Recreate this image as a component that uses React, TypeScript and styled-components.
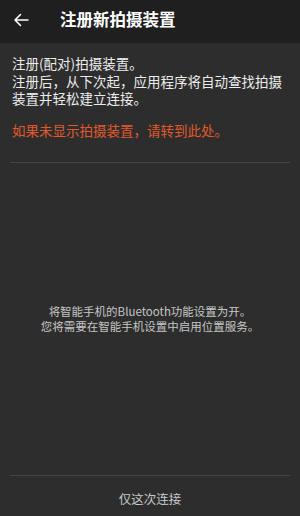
import styled, { createGlobalStyle } from 'styled-components';

const GlobalStyle = createGlobalStyle`
  html, body {
    margin: 0;
    padding: 0;
    background: #2d2d2d;
  }
  body {
    font-family: "Noto Sans CJK SC", "Noto Sans", sans-serif;
  }
`;

const Screen = styled.div`
  width: 300px;
  height: 516px;
  display: flex;
  flex-direction: column;
  background: #2d2d2d;
  overflow: hidden;
`;

const Header = styled.div`
  height: 43px;
  flex-shrink: 0;
  display: flex;
  align-items: center;
  background: #1f1f1f;
`;

const BackButton = styled.div`
  width: 60px;
  height: 43px;
  display: flex;
  align-items: center;
  padding-left: 13px;
  padding-bottom: 4px;
  box-sizing: border-box;
`;

const Title = styled.div`
  color: #ffffff;
  font-size: 16.5px;
  font-weight: 700;
  margin-top: -5px;
`;

const Intro = styled.div`
  padding: 12px 10px 0 12px;
`;

const Paragraph = styled.p<{ $accent?: boolean }>`
  margin: 0;
  font-size: 13.5px;
  line-height: 17.5px;
  color: ${(p) => (p.$accent ? '#e2592a' : '#ececec')};
`;

const Spacer = styled.div<{ $h: number }>`
  height: ${(p) => p.$h}px;
`;

const Divider = styled.div`
  height: 1px;
  margin: 0 10px;
  background: #454545;
`;

const Middle = styled.div`
  flex: 1;
  display: flex;
  flex-direction: column;
  align-items: center;
  justify-content: center;
`;

const Hint = styled.p`
  margin: 0;
  font-size: 11.5px;
  line-height: 15px;
  color: #c6c6c6;
  text-align: center;
`;

const Footer = styled.div`
  height: 40px;
  flex-shrink: 0;
  display: flex;
  align-items: center;
  justify-content: center;
  color: #c8c8c8;
  font-size: 12.5px;
  padding-top: 4px;
  box-sizing: border-box;
`;

export default function App() {
  return (
    <>
      <GlobalStyle />
      <Screen>
        <Header>
          <BackButton>
            <svg width="16" height="16" viewBox="0 0 16 16" fill="none">
              <path
                d="M15 8H2M7.5 2.5L2 8l5.5 5.5"
                stroke="#ffffff"
                strokeWidth="1.6"
                strokeLinecap="round"
                strokeLinejoin="round"
              />
            </svg>
          </BackButton>
          <Title>注册新拍摄装置</Title>
        </Header>
        <Intro>
          <Paragraph>注册(配对)拍摄装置。</Paragraph>
          <Paragraph>注册后，从下次起，应用程序将自动查找拍摄装置并轻松建立连接。</Paragraph>
          <Spacer $h={14.5} />
          <Paragraph $accent>如果未显示拍摄装置，请转到此处。</Paragraph>
          <Spacer $h={22} />
        </Intro>
        <Divider />
        <Middle>
          <Hint>将智能手机的Bluetooth功能设置为开。</Hint>
          <Hint>您将需要在智能手机设置中启用位置服务。</Hint>
        </Middle>
        <Divider />
        <Footer>仅这次连接</Footer>
      </Screen>
    </>
  );
}
